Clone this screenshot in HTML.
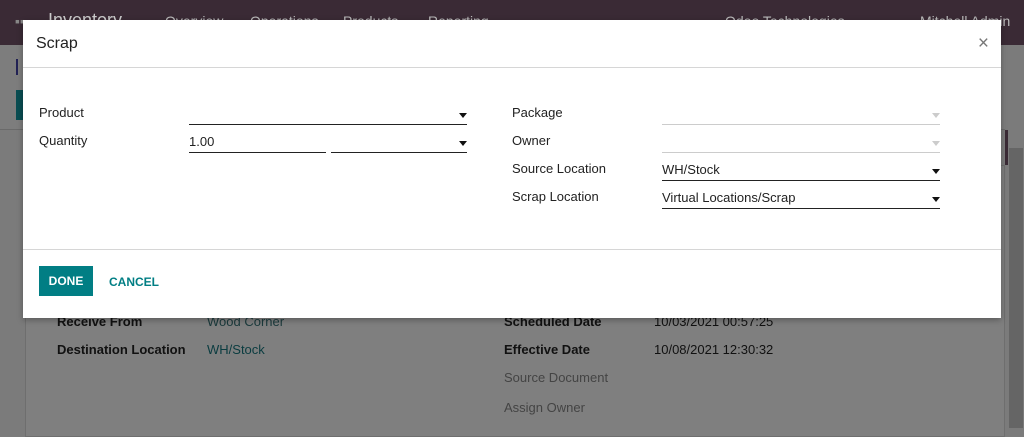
<!DOCTYPE html>
<html><head><style>
*{margin:0;padding:0;box-sizing:border-box}
body{width:1024px;height:437px;overflow:hidden;position:relative;background:#7b7b7b;font-family:"Liberation Sans",sans-serif;font-size:13px;color:#222}
.nav{position:absolute;left:0;top:0;width:1024px;height:45px;background:#3a2a35;color:#bbb}
.nav span{position:absolute;top:13px;font-size:14px}
.ctrl{position:absolute;left:0;top:45px;width:1005px;height:85px;background:#7d7d7d;border-bottom:1px solid #6a6a6a}
.sheet{position:absolute;left:25px;top:165px;width:980px;height:272px;background:#7f7f7f;border:1px solid #6e6e6e}
.bg{position:absolute;font-size:13px}
.modal{position:absolute;left:23px;top:20px;width:978px;height:298px;background:#fff;box-shadow:0 2px 6px rgba(0,0,0,.3)}
.hdr{height:48px;border-bottom:1px solid #d6d6d6;position:relative}
.hdr h4{position:absolute;left:13px;top:15px;font-size:16px;font-weight:normal;color:#222}
.x{position:absolute;right:12px;top:13px;font-size:19px;color:#777}
.lbl{position:absolute;font-size:13px;color:#222}
.fld{position:absolute;height:1px;background:#222}
.fld.l{background:#ccc}
.ar{position:absolute;width:0;height:0;border-left:4px solid transparent;border-right:4px solid transparent;border-top:5px solid #111}
.ar.l{border-top-color:#ccc}
.val{position:absolute;font-size:13px;color:#222}
.ftr{position:absolute;left:0;top:229px;width:978px;border-top:1px solid #d6d6d6}
.btn{position:absolute;left:16px;top:246px;width:54px;height:30px;background:#017e84;color:#fff;font-weight:bold;font-size:12px;text-align:center;line-height:30px}
.cancel{position:absolute;left:86px;top:255px;color:#017e84;font-size:12px;font-weight:bold}
</style></head><body>
<div class="nav"><span style="left:15px;color:#888">▪▪</span><span style="left:48px;font-size:18px;top:10px;color:#ccc">Inventory</span>
<span style="left:165px">Overview</span><span style="left:250px">Operations</span><span style="left:343px">Products</span><span style="left:428px">Reporting</span><span style="left:725px">Odoo Technologies</span><span style="left:920px">Mitchell Admin</span></div>
<div class="ctrl"><div style="position:absolute;left:16px;top:14px;width:2px;height:16px;background:#225"></div><div style="position:absolute;left:16px;top:45px;width:10px;height:30px;background:#0a4d52"></div></div>
<div style="position:absolute;left:1005px;top:130px;width:3px;height:35px;background:#3a2a35"></div>
<div style="position:absolute;left:1008px;top:130px;width:16px;height:307px;background:#7b7b7b"><div style="position:absolute;left:1px;top:18px;width:14px;height:280px;background:#656565"></div></div>
<div class="sheet">
<div class="bg" style="left:31px;top:148px;font-weight:bold;color:#111">Receive From</div>
<div class="bg" style="left:181px;top:148px;color:#1a3a3c">Wood Corner</div>
<div class="bg" style="left:31px;top:176px;font-weight:bold;color:#111">Destination Location</div>
<div class="bg" style="left:181px;top:176px;color:#0a3c40">WH/Stock</div>
<div class="bg" style="left:478px;top:148px;font-weight:bold;color:#111">Scheduled Date</div>
<div class="bg" style="left:628px;top:148px;color:#111">10/03/2021 00:57:25</div>
<div class="bg" style="left:478px;top:176px;font-weight:bold;color:#111">Effective Date</div>
<div class="bg" style="left:628px;top:176px;color:#111">10/08/2021 12:30:32</div>
<div class="bg" style="left:478px;top:204px;color:#444">Source Document</div>
<div class="bg" style="left:478px;top:234px;color:#444">Assign Owner</div>
</div>
<div class="modal">
<div class="hdr"><h4>Scrap</h4><div class="x">×</div></div>
<div class="lbl" style="left:16px;top:85px">Product</div>
<div class="fld" style="left:166px;top:104px;width:278px"></div><div class="ar" style="left:436px;top:93px"></div>
<div class="lbl" style="left:16px;top:113px">Quantity</div>
<div class="val" style="left:166px;top:114px">1.00</div>
<div class="fld" style="left:166px;top:132px;width:137px"></div>
<div class="fld" style="left:308px;top:132px;width:136px"></div><div class="ar" style="left:436px;top:121px"></div>
<div class="lbl" style="left:489px;top:85px">Package</div>
<div class="fld l" style="left:639px;top:104px;width:278px"></div><div class="ar l" style="left:909px;top:93px"></div>
<div class="lbl" style="left:489px;top:113px">Owner</div>
<div class="fld l" style="left:639px;top:132px;width:278px"></div><div class="ar l" style="left:909px;top:121px"></div>
<div class="lbl" style="left:489px;top:141px">Source Location</div>
<div class="val" style="left:639px;top:142px">WH/Stock</div>
<div class="fld" style="left:639px;top:160px;width:278px"></div><div class="ar" style="left:909px;top:149px"></div>
<div class="lbl" style="left:489px;top:169px">Scrap Location</div>
<div class="val" style="left:639px;top:170px">Virtual Locations/Scrap</div>
<div class="fld" style="left:639px;top:188px;width:278px"></div><div class="ar" style="left:909px;top:177px"></div>
<div class="ftr"></div>
<div class="btn">DONE</div>
<div class="cancel">CANCEL</div>
</div>
</body></html>
